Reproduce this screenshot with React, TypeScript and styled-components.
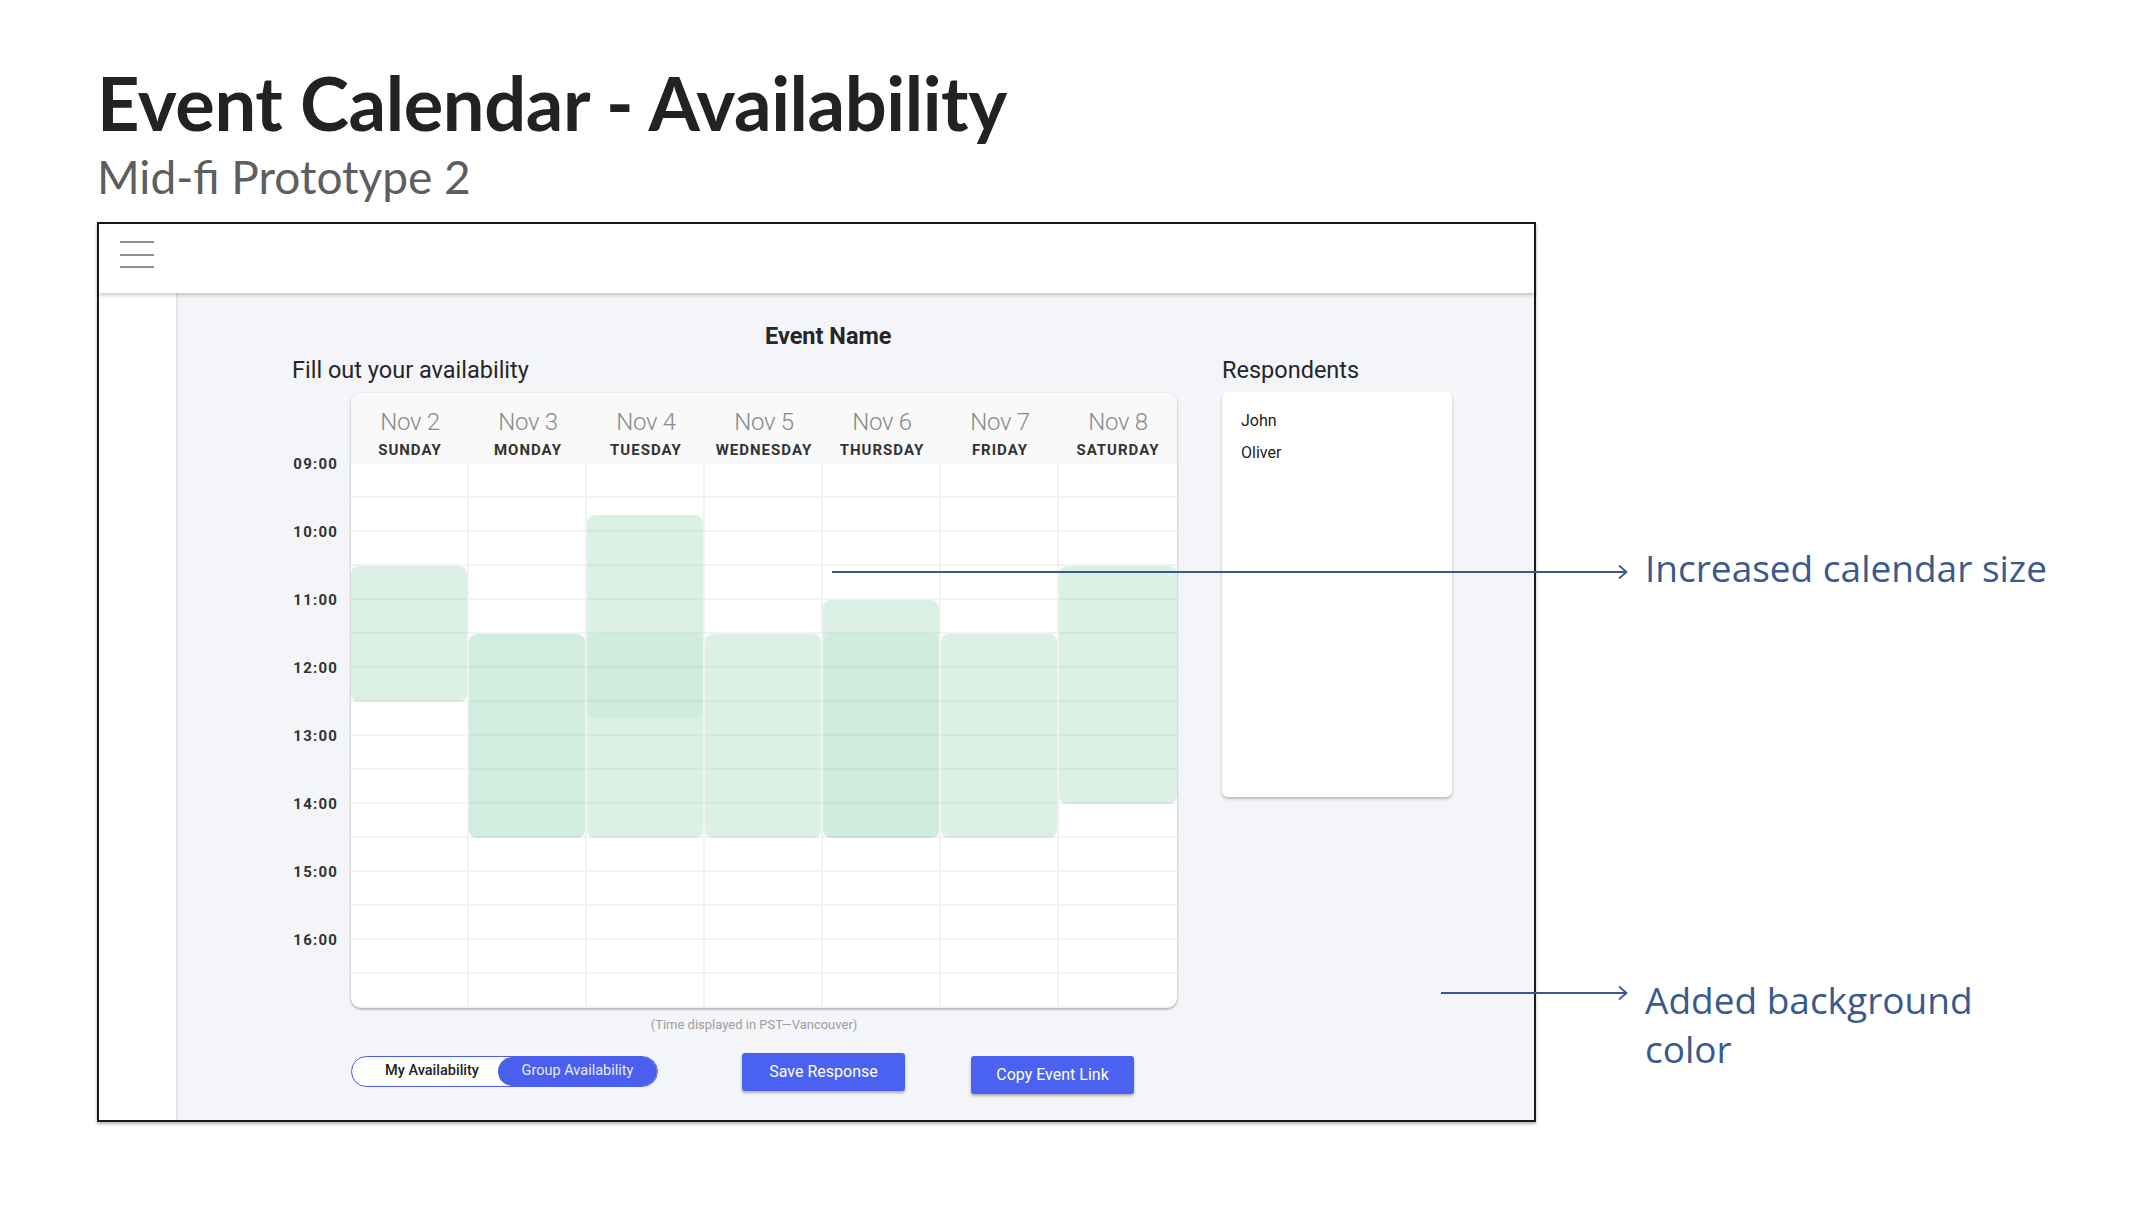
import React from "react";
import styled, { createGlobalStyle } from "styled-components";

const GlobalStyle = createGlobalStyle`
  html, body {
    margin: 0;
    padding: 0;
    background: #ffffff;
  }
  body {
    font-family: Roboto, "Noto Sans", Arial, sans-serif;
  }
  * { box-sizing: border-box; }
`;

type BlockKind = "light" | "dark" | "overlay";

interface Block {
  start: number;
  end: number;
  kind: BlockKind;
}

interface Day {
  date: string;
  name: string;
  blocks: Block[];
}

const DAYS: Day[] = [
  { date: "Nov 2", name: "SUNDAY", blocks: [{ start: 10.5, end: 12.5, kind: "light" }] },
  { date: "Nov 3", name: "MONDAY", blocks: [{ start: 11.5, end: 14.5, kind: "dark" }] },
  {
    date: "Nov 4",
    name: "TUESDAY",
    blocks: [
      { start: 9.75, end: 14.5, kind: "light" },
      { start: 11.5, end: 12.75, kind: "overlay" },
    ],
  },
  { date: "Nov 5", name: "WEDNESDAY", blocks: [{ start: 11.5, end: 14.5, kind: "light" }] },
  {
    date: "Nov 6",
    name: "THURSDAY",
    blocks: [
      { start: 11, end: 14.5, kind: "light" },
      { start: 11.5, end: 14.5, kind: "overlay" },
    ],
  },
  { date: "Nov 7", name: "FRIDAY", blocks: [{ start: 11.5, end: 14.5, kind: "light" }] },
  { date: "Nov 8", name: "SATURDAY", blocks: [{ start: 10.5, end: 14, kind: "light" }] },
];

const HOURS = ["09:00", "10:00", "11:00", "12:00", "13:00", "14:00", "15:00", "16:00"];
const HOUR_PX = 68;
const ROWS = 16;
const RESPONDENTS = ["John", "Oliver"];

const BLOCK_BG: Record<BlockKind, string> = {
  light: "rgba(56, 178, 118, 0.18)",
  dark: "rgba(56, 178, 118, 0.235)",
  overlay: "rgba(56, 178, 118, 0.07)",
};

/* ---------- page ---------- */

const Page = styled.div`
  position: relative;
  width: 2134px;
  height: 1206px;
  padding: 66px 0 0 97px;
  overflow: hidden;
`;

const Title = styled.h1`
  margin: 0;
  font-family: Lato, "Open Sans", Arial, sans-serif;
  font-weight: 700;
  font-size: 74px;
  line-height: 1;
  letter-spacing: -0.4px;
  color: #222222;
`;

const Subtitle = styled.div`
  margin-top: 14px;
  font-family: Lato, "Open Sans", Arial, sans-serif;
  font-weight: 400;
  font-size: 46px;
  line-height: 1;
  color: #5e5e5e;
`;

/* ---------- prototype frame ---------- */

const Frame = styled.div`
  margin-top: 22px;
  width: 1439px;
  height: 900px;
  border: 2px solid #1a1a1a;
  background: #f4f5f9;
  display: flex;
  flex-direction: column;
  box-shadow: 0 2px 3px rgba(0, 0, 0, 0.3);
`;

const TopBar = styled.div`
  flex: none;
  height: 69px;
  background: #ffffff;
  padding: 17px 0 0 21px;
  position: relative;
  z-index: 2;
  box-shadow: 0 2px 4px rgba(0, 0, 0, 0.22);
`;

const Hamburger = styled.div`
  width: 34px;
  display: flex;
  flex-direction: column;
  gap: 10.5px;
`;

const HamburgerBar = styled.span`
  display: block;
  height: 2px;
  background: #8f8f8f;
`;

const Body = styled.div`
  flex: 1;
  display: flex;
  min-height: 0;
`;

const Sidebar = styled.div`
  flex: none;
  width: 77px;
  background: #ffffff;
  position: relative;
  z-index: 1;
  box-shadow: 1px 0 2px rgba(0, 0, 0, 0.12);
`;

const Content = styled.div`
  flex: 1;
  background: #f4f5f9;
  padding: 32px 0 0 116px;
  display: flex;
  flex-direction: column;
`;

const EventName = styled.div`
  padding-left: 473px;
  font-size: 23.5px;
  font-weight: 700;
  line-height: 1;
  color: #262626;
`;

const Columns = styled.div`
  margin-top: 10px;
  display: flex;
  gap: 45px;
`;

const LeftCol = styled.div`
  width: 885px;
  display: flex;
  flex-direction: column;
`;

const RightCol = styled.div`
  width: 230px;
  display: flex;
  flex-direction: column;
`;

const SectionLabel = styled.div`
  font-size: 23.5px;
  line-height: 1;
  color: #262626;
`;

/* ---------- calendar ---------- */

const CalendarRow = styled.div`
  margin-top: 11px;
  display: flex;
`;

const TimeCol = styled.div`
  flex: none;
  width: 59px;
  padding: 37px 13px 0 0;
  display: flex;
  flex-direction: column;
`;

const TimeLabel = styled.div`
  height: ${HOUR_PX}px;
  display: flex;
  align-items: center;
  justify-content: flex-end;
  font-size: 15px;
  font-weight: 700;
  letter-spacing: 1.2px;
  line-height: 1;
  color: #333333;
`;

const Card = styled.div`
  width: 826px;
  background: #ffffff;
  border-radius: 10px;
  overflow: hidden;
  box-shadow: 0 1px 3px rgba(0, 0, 0, 0.28), 0 2px 2px rgba(0, 0, 0, 0.08);
`;

const CardHeader = styled.div`
  display: grid;
  grid-template-columns: repeat(7, 118px);
  height: 71px;
  background: #f9f9f9;
`;

const DayHead = styled.div`
  display: flex;
  flex-direction: column;
  align-items: center;
  padding-top: 17px;
`;

const DayDate = styled.div`
  font-size: 24px;
  font-weight: 300;
  line-height: 1;
  letter-spacing: -0.3px;
  color: #8a8a8a;
`;

const DayName = styled.div`
  margin-top: 9px;
  font-size: 15px;
  font-weight: 700;
  line-height: 1;
  letter-spacing: 1px;
  color: #333333;
`;

const GridBody = styled.div`
  display: grid;
  grid-template-columns: repeat(7, 118px);
`;

const DayCol = styled.div`
  position: relative;
  border-right: 2px solid #f2f2f2;
  &:last-child {
    border-right: none;
  }
`;

const Cell = styled.div`
  height: 34px;
  border-bottom: 2px solid #f3f3f3;
  &:last-child {
    border-bottom: none;
  }
`;

const AvailBlock = styled.div<{ $kind: BlockKind }>`
  position: absolute;
  left: 0;
  right: 0;
  border-radius: 8px;
  background: ${(p) => BLOCK_BG[p.$kind]};
`;

const Note = styled.div`
  margin: 10px 0 0 59px;
  width: 826px;
  padding-right: 20px;
  text-align: center;
  font-size: 13px;
  line-height: 1;
  color: #9c9c9c;
`;

/* ---------- controls ---------- */

const ButtonRow = styled.div`
  margin: 22px 0 0 59px;
  display: flex;
  align-items: flex-start;
`;

const Toggle = styled.div`
  margin-top: 3px;
  width: 307px;
  height: 31px;
  border: 1px solid #4a5fed;
  border-radius: 16px;
  background: #ffffff;
  display: flex;
  overflow: hidden;
`;

const ToggleOption = styled.div<{ $active?: boolean }>`
  display: flex;
  align-items: center;
  justify-content: center;
  font-size: 14.5px;
  line-height: 1;
  ${(p) =>
    p.$active
      ? `
    flex: 1;
    margin-left: -14px;
    background: #4a5fed;
    border-radius: 16px;
    color: #e8ebff;
    font-weight: 400;
  `
      : `
    flex: none;
    width: 160px;
    color: #222222;
    font-weight: 500;
  `}
`;

const ActionButton = styled.button<{ $offset: number; $drop: number }>`
  margin-left: ${(p) => p.$offset}px;
  margin-top: ${(p) => p.$drop}px;
  width: 163px;
  height: 38px;
  border: none;
  border-radius: 3px;
  background: #4b62f0;
  color: #ffffff;
  font-family: Roboto, "Noto Sans", Arial, sans-serif;
  font-size: 16px;
  line-height: 1;
  box-shadow: 0 2px 3px rgba(0, 0, 0, 0.3);
  cursor: pointer;
`;

/* ---------- respondents ---------- */

const RespCard = styled.div`
  margin-top: 10px;
  height: 405px;
  background: #ffffff;
  border-radius: 6px;
  padding: 13px 19px;
  box-shadow: 0 2px 3px rgba(0, 0, 0, 0.25);
`;

const RespName = styled.div`
  font-size: 16px;
  line-height: 32px;
  color: #222222;
`;

/* ---------- annotations (overlay) ---------- */

const Overlay = styled.div<{ $top: number; $left: number }>`
  position: absolute;
  top: ${(p) => p.$top}px;
  left: ${(p) => p.$left}px;
`;

const NoteText = styled.div<{ $tight?: boolean }>`
  font-family: "Open Sans", "Noto Sans", Arial, sans-serif;
  font-size: 37px;
  font-weight: 500;
  line-height: ${(p) => (p.$tight ? "1" : "49px")};
  color: #3a5a8e;
  white-space: nowrap;
`;

const Arrow: React.FC<{ length: number }> = ({ length }) => (
  <svg width={length} height={16} viewBox={`0 0 ${length} 16`} style={{ display: "block" }}>
    <line x1={0} y1={8} x2={length - 1} y2={8} stroke="#3a5a8e" strokeWidth={2} />
    <path
      d={`M${length - 9} 1.5 L${length - 1.5} 8 L${length - 9} 14.5`}
      fill="none"
      stroke="#3a5a8e"
      strokeWidth={1.8}
    />
  </svg>
);

export default function App() {
  return (
    <>
      <GlobalStyle />
      <Page>
        <Title>Event Calendar - Availability</Title>
        <Subtitle>Mid-fi Prototype 2</Subtitle>
        <Frame>
          <TopBar>
            <Hamburger>
              <HamburgerBar />
              <HamburgerBar />
              <HamburgerBar />
            </Hamburger>
          </TopBar>
          <Body>
            <Sidebar />
            <Content>
              <EventName>Event Name</EventName>
              <Columns>
                <LeftCol>
                  <SectionLabel>Fill out your availability</SectionLabel>
                  <CalendarRow>
                    <TimeCol>
                      {HOURS.map((h) => (
                        <TimeLabel key={h}>{h}</TimeLabel>
                      ))}
                    </TimeCol>
                    <Card>
                      <CardHeader>
                        {DAYS.map((d) => (
                          <DayHead key={d.date}>
                            <DayDate>{d.date}</DayDate>
                            <DayName>{d.name}</DayName>
                          </DayHead>
                        ))}
                      </CardHeader>
                      <GridBody>
                        {DAYS.map((d) => (
                          <DayCol key={d.date}>
                            {Array.from({ length: ROWS }).map((_, i) => (
                              <Cell key={i} />
                            ))}
                            {d.blocks.map((b, i) => (
                              <AvailBlock
                                key={i}
                                $kind={b.kind}
                                style={{
                                  top: (b.start - 9) * HOUR_PX,
                                  height: (b.end - b.start) * HOUR_PX,
                                }}
                              />
                            ))}
                          </DayCol>
                        ))}
                      </GridBody>
                    </Card>
                  </CalendarRow>
                  <Note>(Time displayed in PST—Vancouver)</Note>
                  <ButtonRow>
                    <Toggle>
                      <ToggleOption>My Availability</ToggleOption>
                      <ToggleOption $active>Group Availability</ToggleOption>
                    </Toggle>
                    <ActionButton $offset={84} $drop={0}>
                      Save Response
                    </ActionButton>
                    <ActionButton $offset={66} $drop={3}>
                      Copy Event Link
                    </ActionButton>
                  </ButtonRow>
                </LeftCol>
                <RightCol>
                  <SectionLabel>Respondents</SectionLabel>
                  <RespCard>
                    {RESPONDENTS.map((r) => (
                      <RespName key={r}>{r}</RespName>
                    ))}
                  </RespCard>
                </RightCol>
              </Columns>
            </Content>
          </Body>
        </Frame>

        <Overlay $top={564} $left={832}>
          <Arrow length={796} />
        </Overlay>
        <Overlay $top={549} $left={1645}>
          <NoteText $tight>Increased calendar size</NoteText>
        </Overlay>
        <Overlay $top={985} $left={1441}>
          <Arrow length={187} />
        </Overlay>
        <Overlay $top={975} $left={1645}>
          <NoteText>
            Added background
            <br />
            color
          </NoteText>
        </Overlay>
      </Page>
    </>
  );
}
